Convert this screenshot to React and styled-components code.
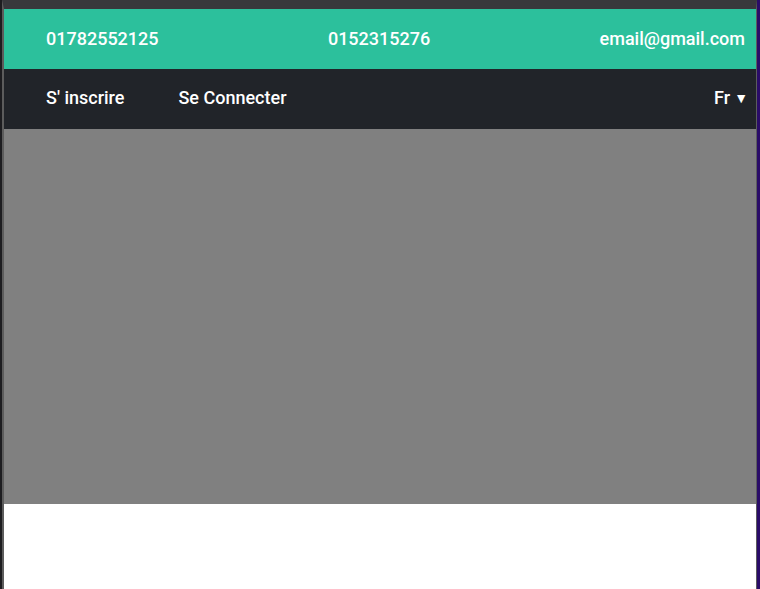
import React from 'react'
import styled, { createGlobalStyle } from 'styled-components'

const GlobalStyle = createGlobalStyle`
  html, body {
    margin: 0;
    padding: 0;
    height: 100%;
    background: #1d1d20;
  }
  #root {
    height: 100%;
  }
  * {
    box-sizing: border-box;
  }
`

const Desktop = styled.div`
  height: 100%;
  border-left: 2px solid #1d1d20;
  border-right: 3px solid #2a0c68;
`

const Window = styled.div`
  height: 100%;
  display: flex;
  flex-direction: column;
  background: #ffffff;
  border-style: solid;
  border-width: 9px 1px 0 2px;
  border-color: #38383c #5c5c5c #5c5c5c #5c5c5c;
  font-family: Roboto, "Liberation Sans", sans-serif;
`

const Bar = styled.div`
  height: 60px;
  flex: 0 0 auto;
  display: flex;
  align-items: center;
  padding: 0 11px ${({ $lift }) => $lift || 0}px 42px;
  background-color: ${({ $bg }) => $bg};
  justify-content: ${({ $spread }) => ($spread ? 'space-between' : 'flex-start')};
  gap: ${({ $spread }) => ($spread ? '0' : '54px')};
`

const Info = styled.span`
  color: #ffffff;
  font-size: 18px;
  font-weight: 500;
  white-space: nowrap;
`

const NavLink = styled.a`
  color: #ffffff;
  font-size: 18px;
  font-weight: 500;
  text-decoration: none;
  white-space: nowrap;
  cursor: pointer;
`

const Lang = styled.div`
  margin-left: auto;
  margin-right: -3px;
  display: flex;
  align-items: center;
  gap: 4px;
  color: #ffffff;
  font-size: 18px;
  font-weight: 500;
`

const Caret = styled.span`
  font-size: 14px;
  line-height: 1;
`

const Hero = styled.div`
  height: 375px;
  flex: 0 0 auto;
  background-color: #808080;
`

const Body = styled.div`
  flex: 1;
  background: #ffffff;
`

const App = () => {
  return (
    <>
      <GlobalStyle />
      <Desktop>
        <Window>
          <Bar $bg="#2cc09c" $spread $lift={1}>
            <Info>01782552125</Info>
            <Info>0152315276</Info>
            <Info>email@gmail.com</Info>
          </Bar>
          <Bar $bg="#212429" $lift={3}>
            <NavLink>S' inscrire</NavLink>
            <NavLink>Se Connecter</NavLink>
            <Lang>
              Fr <Caret>▼</Caret>
            </Lang>
          </Bar>
          <Hero />
          <Body />
        </Window>
      </Desktop>
    </>
  )
}

export default App
